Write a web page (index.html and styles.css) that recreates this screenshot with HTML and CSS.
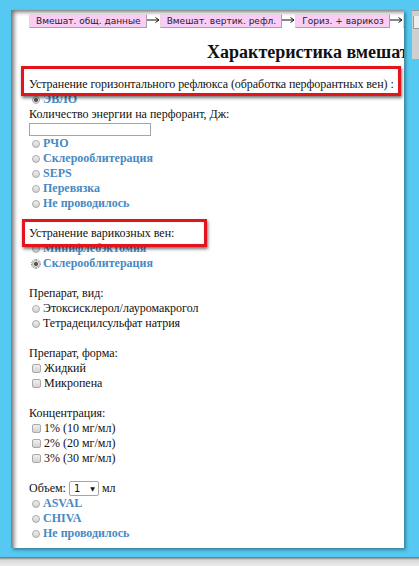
FILE: index.html
```html
<!doctype html>
<html lang="ru">
<head>
    <meta charset="UTF-8">
    <title>Характеристика вмешательства</title>
    <link rel="stylesheet" href="styles.css">
</head>
<body>
    <div class="page">
        <div class="frame">
            <nav class="steps">
                <span class="step">Вмешат. общ. данные</span>
                <svg class="arrow" viewBox="0 0 13 8"><path d="M0 4H12M8.5 1.5L12 4L8.5 6.5"/></svg>
                <span class="step">Вмешат. вертик. рефл.</span>
                <svg class="arrow" viewBox="0 0 13 8"><path d="M0 4H12M8.5 1.5L12 4L8.5 6.5"/></svg>
                <span class="step">Гориз. + варикоз</span>
                <svg class="arrow" viewBox="0 0 13 8"><path d="M0 4H12M8.5 1.5L12 4L8.5 6.5"/></svg>
                <span class="step">Склеротерапия</span>
            </nav>
            <h1 class="title">Характеристика вмешательства</h1>
            <form class="form">
                <div class="line callout callout-wide">Устранение горизонтального рефлюкса (обработка перфорантных вен) :</div>
                <label class="line opt"><span class="radio checked"></span>ЭВЛО</label>
                <div class="line">Количество энергии на перфорант, Дж:</div>
                <input class="energy" type="text">
                <label class="line opt"><span class="radio"></span>РЧО</label>
                <label class="line opt"><span class="radio"></span>Склерооблитерация</label>
                <label class="line opt"><span class="radio"></span>SEPS</label>
                <label class="line opt"><span class="radio"></span>Перевязка</label>
                <label class="line opt"><span class="radio"></span>Не проводилось</label>

                <div class="line group callout callout-narrow">Устранение варикозных вен:</div>
                <label class="line opt"><span class="radio"></span>Минифлебэктомия</label>
                <label class="line opt"><span class="radio checked focus"></span>Склерооблитерация</label>

                <div class="line group">Препарат, вид:</div>
                <label class="line plain"><span class="radio"></span>Этоксисклерол/лауромакрогол</label>
                <label class="line plain"><span class="radio"></span>Тетрадецилсульфат натрия</label>

                <div class="line group">Препарат, форма:</div>
                <label class="line plain"><span class="check"></span>Жидкий</label>
                <label class="line plain"><span class="check"></span>Микропена</label>

                <div class="line group">Концентрация:</div>
                <label class="line plain"><span class="check"></span>1% (10 мг/мл)</label>
                <label class="line plain"><span class="check"></span>2% (20 мг/мл)</label>
                <label class="line plain"><span class="check"></span>3% (30 мг/мл)</label>

                <div class="line group volume">Объем: <span class="select">1 <span class="caret">&#9660;</span></span> мл</div>
                <label class="line opt"><span class="radio"></span>ASVAL</label>
                <label class="line opt"><span class="radio"></span>CHIVA</label>
                <label class="line opt"><span class="radio"></span>Не проводилось</label>
            </form>
        </div>
        <div class="sliver"><span class="sliver-tab"></span></div>
    </div>
    <div class="bottom"></div>
</body>
</html>
```

FILE: styles.css
```css
:root {
    --sky: #55c9f1;
    --link: #4789c4;
    --red: #e5141c;
}

html, body {
    margin: 0;
    height: 100%;
    overflow: hidden;
}

body {
    background: var(--sky);
    font-family: 'Liberation Serif', serif;
    font-size: 12px;
    color: #111;
}

.page {
    display: flex;
    align-items: flex-start;
    padding: 10px 0 0 11px;
}

.frame {
    width: 393px;
    height: 538px;
    box-sizing: border-box;
    padding: 4px 0 0 18px;
    background: #fff;
    overflow: hidden;
    box-shadow: inset 5px 4px 4px -2px rgba(0,0,0,0.55), 2px 2px 3px rgba(0,0,0,0.35);
    flex-shrink: 0;
}

.steps {
    display: flex;
    align-items: center;
    height: 14px;
    white-space: nowrap;
    font-family: 'DejaVu Sans', sans-serif;
    font-size: 9px;
}

.step {
    display: inline-block;
    height: 14px;
    line-height: 13px;
    box-sizing: border-box;
    padding: 0 5px 0 6px;
    background: #f9cdf6;
    border: 1px solid #a9a0a8;
    border-top-color: #e6d6e4;
    border-left-color: #e6d6e4;
    color: #222;
    flex-shrink: 0;
}

.arrow {
    width: 13px;
    height: 8px;
    margin-top: -3px;
    flex-shrink: 0;
    fill: none;
    stroke: #111;
    stroke-width: 1;
}

.title {
    margin: 13px 0 14px 178px;
    font-size: 18px;
    line-height: 22px;
    font-weight: bold;
    white-space: nowrap;
}

.form {
    display: flex;
    flex-direction: column;
    align-items: flex-start;
}

.line {
    height: 15px;
    line-height: 15px;
    white-space: nowrap;
}

.group {
    margin-top: 15px;
}

.opt {
    padding-left: 3px;
    color: var(--link);
    font-weight: bold;
}

.plain {
    padding-left: 3px;
}

.radio,
.check {
    display: inline-block;
    width: 8px;
    height: 8px;
    margin-right: 3px;
    vertical-align: -0.5px;
    box-sizing: border-box;
    border: 1px solid #a9a9a9;
    background: linear-gradient(#f0f0f0, #d2d2d2);
}

.radio {
    border-radius: 50%;
}

.check {
    width: 9px;
    height: 9px;
    border-radius: 2px;
}

.radio.checked {
    background: radial-gradient(circle, #555 0 1.8px, #e4e4e4 2.3px);
}

.radio.focus {
    outline: 1px dotted #777;
    outline-offset: 0;
}

.energy {
    width: 122px;
    height: 13px;
    margin: 1px 0 0 0;
    padding: 0;
    box-sizing: border-box;
    border: 1px solid #a5a5a5;
    background: #fff;
}

.callout {
    position: relative;
    z-index: 2;
}

.callout::before {
    content: "";
    position: absolute;
    border: 3px solid var(--red);
    box-shadow: 1px 2px 3px rgba(0,0,0,0.55), inset 0 0 1px rgba(0,0,0,0.3);
    pointer-events: none;
}

.callout-wide {
    letter-spacing: -0.05px;
}

.callout-wide::before {
    top: -11px;
    bottom: -4px;
    left: -8px;
    width: 374px;
}

.callout-narrow::before {
    top: -7px;
    bottom: -6px;
    left: -7px;
    width: 179px;
}

.volume {
    display: flex;
    align-items: center;
    gap: 3px;
}

.select {
    display: inline-flex;
    align-items: center;
    justify-content: space-between;
    width: 30px;
    height: 15px;
    box-sizing: border-box;
    padding: 0 3px 0 4px;
    border: 1px solid #a5a5a5;
    border-radius: 2px;
    font-family: 'DejaVu Sans', sans-serif;
    font-size: 10px;
    line-height: 13px;
}

.caret {
    font-size: 6px;
}

.sliver {
    width: 7px;
    height: 48px;
    margin-left: 8px;
    background: #cfcfcf;
    border-top: 1px solid #9a9a9a;
}

.sliver-tab {
    display: block;
    width: 6px;
    height: 12px;
    margin: 5px 0 0 1px;
    background: #eee;
    border-left: 1px solid #999;
    border-bottom: 1px solid #999;
}

.bottom {
    height: 9px;
    margin-top: 9px;
    background: linear-gradient(#6a6a6a, #d8d8d8 3px, #ececec);
}
```
